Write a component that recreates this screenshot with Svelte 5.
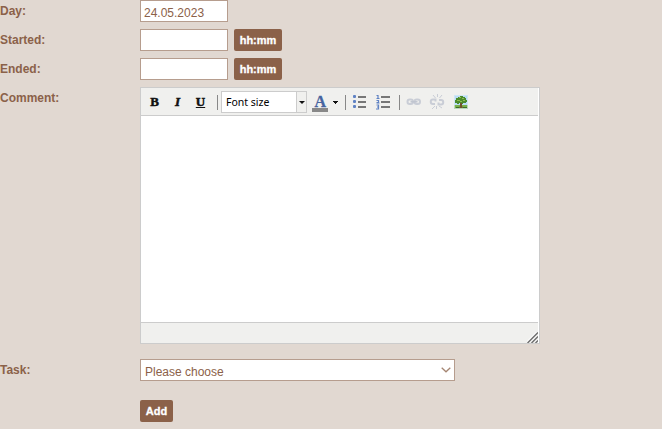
<script>
  let day = $state('24.05.2023');
  let started = $state('');
  let ended = $state('');
</script>

<form class="form" onsubmit={(e) => e.preventDefault()}>
  <div class="row">
    <label for="day">Day:</label>
    <input id="day" bind:value={day} />
  </div>
  <div class="row">
    <label for="started">Started:</label>
    <input id="started" bind:value={started} />
    <button type="button" class="btn time">hh:mm</button>
  </div>
  <div class="row">
    <label for="ended">Ended:</label>
    <input id="ended" bind:value={ended} />
    <button type="button" class="btn time">hh:mm</button>
  </div>
  <div class="row comment">
    <span class="label">Comment:</span>
    <div class="editor">
      <div class="toolbar">
        <span class="tool b">B</span>
        <span class="tool i">I</span>
        <span class="tool u">U</span>
        <span class="sep first"></span>
        <div class="size"><span class="name">Font size</span><span class="drop"><i class="arrow"></i></span></div>
        <svg class="color" width="30" height="20" viewBox="0 0 30 20">
          <text x="8.2" y="14" text-anchor="middle" font-family="Liberation Serif, serif" font-weight="bold" font-size="16" fill="#46639f">A</text>
          <rect x="0" y="15" width="16" height="4" fill="#888" />
          <path d="M21 8h5v1h-1v1h-1v1h-1v-1h-1v-1h-1z" fill="#111" />
        </svg>
        <span class="sep second"></span>
        <svg class="bullets" width="14" height="16" viewBox="0 0 14 16">
          <g fill="#5f82c4"><rect y="1" width="3" height="3" rx="1" /><rect y="6" width="3" height="3" rx="1" /><rect y="11" width="3" height="3" rx="1" /></g>
          <path d="M5 2h8v2H5zM5 7h8v2H5zM5 12h8v2H5z" fill="#777" />
        </svg>
        <svg class="numbers" width="15" height="16" viewBox="0 0 15 16">
          <path d="M.5 1.500h1.500v3M.5 4.500h3M.5 6.500h2v2h-2M.5 9h3M.5 11h2v4h-2.500M1 13h2" fill="none" stroke="#5f82c4" stroke-width="1.200" />
          <path d="M5 2h9v2H5zM5 7h9v2H5zM5 12h9v2H5z" fill="#777" />
        </svg>
        <span class="sep third"></span>
        <svg class="link" width="16" height="16" viewBox="0 0 16 16" fill="none" stroke="#c9cdd6" stroke-width="2">
          <rect x="1.500" y="5.500" width="5.500" height="4.500" rx="2.200" /><rect x="8.500" y="5.500" width="5.500" height="4.500" rx="2.200" />
          <path d="M4.500 7.800h7" stroke="#bfc4cf" stroke-width="1.500" />
        </svg>
        <svg class="unlink" width="16" height="16" viewBox="0 0 16 16" fill="none" stroke="#c9cdd6" stroke-width="2">
          <path d="M6 10H4a2 2 0 0 1 0-4.500h2.500v2M10 6h2a2 2 0 0 1 0 4.500H9.500v-2" />
          <path d="M4 1l2.500 3M8.500 0v3M13 1l-2.500 3M3 15l3-3M7.500 15v-3M13 14l-3-2" stroke-width="1" />
        </svg>
        <svg class="image" width="14" height="14" viewBox="0 0 14 14">
          <rect width="14" height="14" fill="#b9dcf5" />
          <rect y="10" width="14" height="4" fill="#7ab04a" />
          <path d="M6 7h2v4l1 2H5l1-2z" fill="#70522b" />
          <path d="M4 2h2V1h3v1h2v1h1v2h1v2h-1v1H9v1H8V8H5v1H3V8H1V5h1V3h2z" fill="#4b8b2c" />
          <path d="M5 2h2v1H5zM8 3h2v1H8zM9 5h2v1H9zM3 5h3v1H3zM6 6h2v1H6z" fill="#8dbe51" />
          <path d="M2 12h3v1H2zM9 12h4v1H9z" fill="#386f29" />
          <rect x=".5" y=".5" width="13" height="13" fill="none" stroke="#dcebf2" stroke-opacity=".65" />
        </svg>
      </div>
      <div class="area"></div>
      <div class="status">
        <svg width="11" height="11" viewBox="0 0 11 11" stroke="#fff" stroke-width="1.500">
          <path d="M0 10L10 0M4 10L10 4M8 10L10 8" />
          <path d="M.5 11L11 .5M4.500 11L11 4.500M8.500 11L11 8.500" stroke="#707070" />
        </svg>
      </div>
    </div>
  </div>
  <div class="row task">
    <span class="label">Task:</span>
    <div class="select"><span>Please choose</span>
      <svg width="10" height="6" viewBox="0 0 10 6"><path d="M.7 .7L5 4.800L9.300 .7" fill="none" stroke="#a58673" stroke-width="1.300" /></svg>
    </div>
  </div>
  <div class="row submit"><button class="btn add">Add</button></div>
</form>

<style>
  :global(body) { background: #e1d8d1; overflow: hidden; }
  .form { height: 429px; color: #8b6149; font: 12px/22px "Liberation Sans", Arial, sans-serif; }
  .row { display: flex; height: 22px; margin-bottom: 7px; }
  label, .label { width: 140px; flex: none; font-weight: bold; }
  input { box-sizing: border-box; width: 88px; height: 22px; margin: 0; padding: 4px 3px 0; border: 1px solid #b69d8e; background: #fff; color: #8b6149; font: 12px "Liberation Sans", Arial, sans-serif; outline: 0; }
  .btn { height: 22px; border: 0; border-radius: 2px; padding: 0; background: #8b6149; color: #fff; font: bold 11px "Liberation Sans", Arial, sans-serif; -webkit-text-stroke: .3px #fff; }
  .time { width: 48px; margin-left: 6px; }
  .comment { height: 257px; margin-bottom: 15px; }
  .editor { box-sizing: border-box; width: 400px; height: 257px; border: 1px solid #ccc; background: #fff; }
  .toolbar { box-sizing: border-box; display: flex; align-items: center; width: 397px; height: 28px; background: #f0f0ee; border-bottom: 1px solid #ccc; }
  .tool { width: 23px; text-align: center; font: bold 13px/28px "Liberation Serif", serif; color: #111; -webkit-text-stroke: .5px #111; padding-top: 1px; }
  .tool.b { margin-left: 2px; }
  .tool.i { font-style: italic; }
  .u { text-decoration: underline; }
  .sep { width: 1px; height: 15px; background: #888; margin-top: 2px; flex: none; }
  .first { margin-left: 5px; margin-right: 3px; }
  .size { box-sizing: border-box; display: flex; width: 86px; height: 22px; border: 1px solid #ccc; background: #fff; flex: none; margin-top: 1px; }
  .name { width: 70px; padding-left: 4px; font: 10.5px/21px "Noto Sans", sans-serif; color: #000; }
  .drop { width: 9px; background: #f0f0ee; border-left: 1px solid #ccc; display: flex; align-items: center; justify-content: center; }
  .arrow { border: 2.5px solid transparent; border-width: 0 3px; border-top: 3px solid #111; }
  svg { display: block; flex: none; }
  .color { margin-left: 5px; margin-top: 3px; }
  .color text { stroke: #46639f; stroke-width: .3px; }
  .second { margin-left: 3px; }
  .bullets { margin-left: 7px; margin-top: 1px; }
  .numbers { margin-left: 9px; margin-top: 1px; }
  .third { margin-left: 8px; }
  .link { margin-left: 6px; margin-top: 1px; }
  .unlink { margin-left: 7px; margin-top: 1px; }
  .image { margin-left: 9px; margin-top: 1px; }
  .area { height: 206px; }
  .status { box-sizing: border-box; display: flex; justify-content: flex-end; align-items: flex-end; width: 397px; height: 21px; border-top: 1px solid #ccc; background: #f0f0ee; }
  .task { margin-bottom: 19px; }
  .select { box-sizing: border-box; display: flex; justify-content: space-between; align-items: center; width: 315px; height: 22px; border: 1px solid #b69d8e; background: #fff; padding: 3px 3px 0 4px; }
  .select svg { margin-top: -3px; }
  .submit { padding-left: 140px; margin-bottom: 0; }
  .add { width: 33px; }
</style>
